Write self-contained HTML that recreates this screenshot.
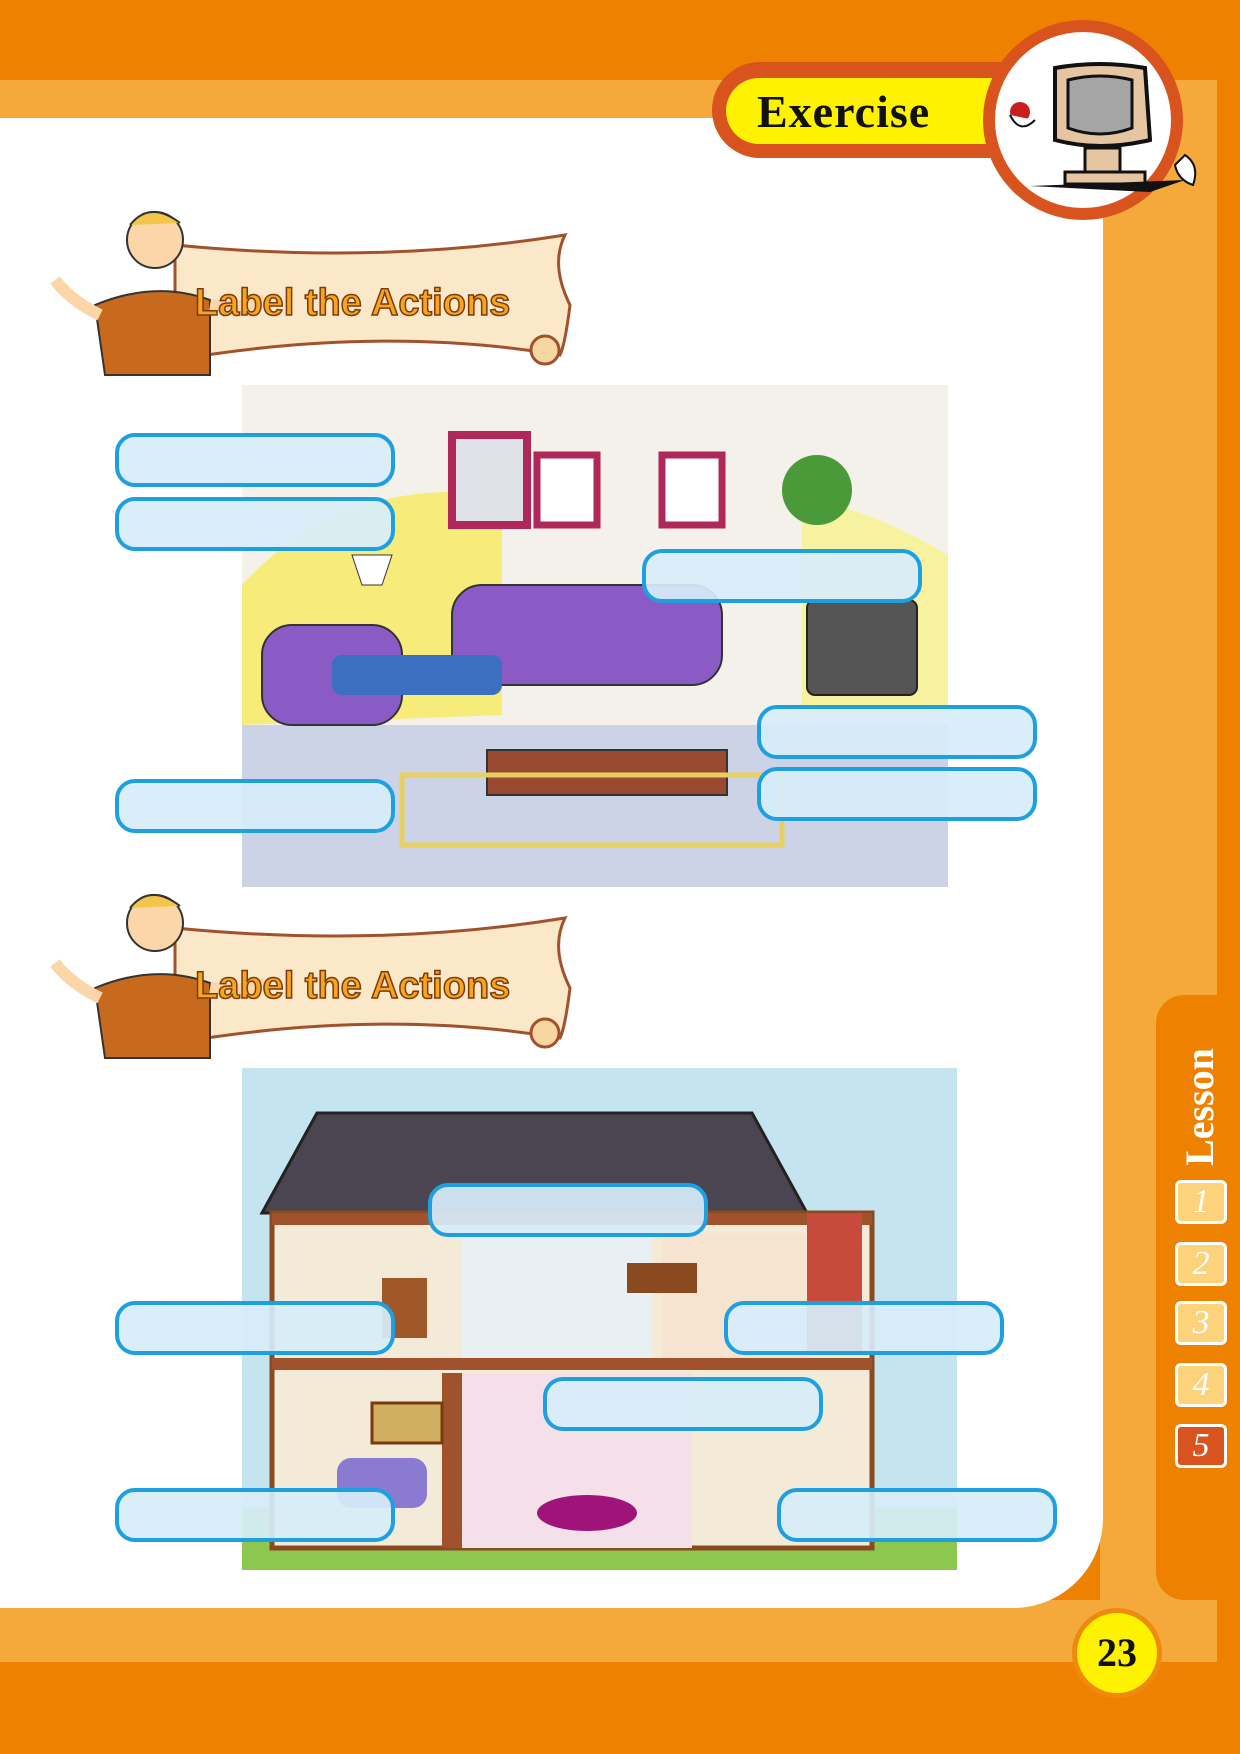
<!DOCTYPE html>
<html><head><meta charset="utf-8"><style>
*{margin:0;padding:0;box-sizing:border-box}
body{width:1240px;height:1754px;position:relative;overflow:hidden;background:#ee8200;font-family:"Liberation Sans",sans-serif}
.abs{position:absolute}
.lbl{position:absolute;width:280px;height:54px;border:4px solid #1ea0e0;border-radius:20px;background:rgba(215,237,250,0.92)}
.num{position:absolute;left:1175px;width:52px;height:44px;border:3px solid #fff;border-radius:6px;background:#fcd27a;color:#fff;font:italic 34px "Liberation Serif",serif;text-align:center;line-height:38px}
.title{position:absolute;font:bold 38px "Liberation Sans",sans-serif;color:#f7a51c;-webkit-text-stroke:1.5px #7a3a10}
</style></head><body>
<div class="abs" style="left:0;top:80px;width:1217px;height:38px;background:#f5a93a"></div>
<div class="abs" style="left:1100px;top:80px;width:117px;height:1582px;background:#f5a93a"></div>
<div class="abs" style="left:0;top:1600px;width:1217px;height:62px;background:#f5a93a"></div>
<div class="abs" style="left:0;top:118px;width:1103px;height:1490px;background:#fff;border-bottom-right-radius:90px"></div>
<div class="abs" style="left:1156px;top:995px;width:84px;height:605px;background:#ee8200;border-radius:28px 0 0 28px"></div>
<div class="abs" style="left:1115px;top:1085px;width:170px;height:44px;transform:rotate(-90deg);color:#fff;font:bold 40px 'Liberation Serif',serif;line-height:44px;text-align:center">Lesson</div>
<div class="num" style="top:1180px">1</div>
<div class="num" style="top:1242px">2</div>
<div class="num" style="top:1301px">3</div>
<div class="num" style="top:1363px">4</div>
<div class="num" style="top:1424px;background:#d9531e">5</div>
<div class="abs" style="left:1072px;top:1608px;width:90px;height:90px;border-radius:50%;background:#fff200;border:5px solid #ef8a10;text-align:center;font:bold 40px 'Liberation Serif',serif;line-height:80px;color:#111">23</div>
<div class="abs" style="left:712px;top:62px;width:340px;height:96px;border-radius:48px 0 0 48px;background:#d9531e"></div>
<div class="abs" style="left:726px;top:78px;width:320px;height:66px;border-radius:33px 0 0 33px;background:#fff200"></div>
<div class="abs" style="left:757px;top:84px;font:bold 46px 'Liberation Serif',serif;color:#111;letter-spacing:1px;line-height:56px">Exercise</div>
<div class="abs" style="left:983px;top:20px;width:200px;height:200px;border-radius:50%;background:#fff;border:12px solid #d9531e"></div>
<svg class="abs" style="left:960px;top:20px" width="240" height="200">
<path d="M95 48 Q140 40 185 48 L190 120 Q140 132 95 120Z" fill="#e6c6a2" stroke="#111" stroke-width="4"/>
<path d="M108 60 Q140 52 172 60 L172 108 Q140 120 108 108Z" fill="#a5a5a5" stroke="#111" stroke-width="3"/>
<rect x="125" y="128" width="35" height="25" fill="#e6c6a2" stroke="#111" stroke-width="3"/>
<rect x="105" y="152" width="80" height="12" fill="#e6c6a2" stroke="#111" stroke-width="3"/>
<path d="M70 166 L225 160 L190 172Z" fill="#111"/>
<circle cx="60" cy="92" r="10" fill="#c81e1e"/>
<path d="M50 95 q10 20 25 5" fill="#fff" stroke="#111" stroke-width="2"/>
<path d="M225 135 q15 10 8 30 q-15 -5 -18 -20Z" fill="#fff" stroke="#111" stroke-width="2"/>
</svg>
<svg class="abs" style="left:50px;top:205px" width="540" height="175">
<path d="M125 40 Q330 60 515 30 Q500 60 520 100 Q515 140 510 150 Q330 120 125 155Z" fill="#fbe8c8" stroke="#a0522d" stroke-width="3"/>
<circle cx="495" cy="145" r="14" fill="#f7d7a0" stroke="#a0522d" stroke-width="3"/>
<circle cx="105" cy="35" r="28" fill="#fbd6a8" stroke="#333" stroke-width="2"/>
<path d="M80 20 Q100 -5 130 18" fill="#f3c64a" stroke="#333" stroke-width="2"/>
<path d="M45 100 Q105 75 160 95 L160 170 L55 170Z" fill="#c86a1e" stroke="#333" stroke-width="2"/>
<path d="M5 75 Q20 95 50 110" stroke="#fbd6a8" stroke-width="12" fill="none"/>
<path d="M160 100 Q190 105 215 95" stroke="#fbd6a8" stroke-width="12" fill="none"/>
</svg>
<div class="title" style="left:195px;top:282px">Label the Actions</div>
<svg class="abs" style="left:50px;top:888px" width="540" height="175">
<path d="M125 40 Q330 60 515 30 Q500 60 520 100 Q515 140 510 150 Q330 120 125 155Z" fill="#fbe8c8" stroke="#a0522d" stroke-width="3"/>
<circle cx="495" cy="145" r="14" fill="#f7d7a0" stroke="#a0522d" stroke-width="3"/>
<circle cx="105" cy="35" r="28" fill="#fbd6a8" stroke="#333" stroke-width="2"/>
<path d="M80 20 Q100 -5 130 18" fill="#f3c64a" stroke="#333" stroke-width="2"/>
<path d="M45 100 Q105 75 160 95 L160 170 L55 170Z" fill="#c86a1e" stroke="#333" stroke-width="2"/>
<path d="M5 75 Q20 95 50 110" stroke="#fbd6a8" stroke-width="12" fill="none"/>
<path d="M160 100 Q190 105 215 95" stroke="#fbd6a8" stroke-width="12" fill="none"/>
</svg>
<div class="title" style="left:195px;top:965px">Label the Actions</div>
<svg class="abs" style="left:242px;top:385px" width="706" height="502">
<rect width="706" height="502" fill="#f4f1ea"/>
<path d="M0 200 Q100 90 260 110 L260 330 L0 340Z" fill="#f7ec7a"/>
<path d="M560 110 Q640 130 706 170 L706 330 L560 330Z" fill="#f7f2a0"/>
<rect x="0" y="340" width="706" height="162" fill="#cdd3e6"/>
<rect x="210" y="50" width="75" height="90" fill="#e0e0e8" stroke="#b0285a" stroke-width="8"/>
<rect x="295" y="70" width="60" height="70" fill="#fff" stroke="#b0285a" stroke-width="7"/>
<rect x="420" y="70" width="60" height="70" fill="#fff" stroke="#b0285a" stroke-width="7"/>
<rect x="210" y="200" width="270" height="100" rx="30" fill="#8a5bc4" stroke="#333" stroke-width="2"/>
<rect x="20" y="240" width="140" height="100" rx="30" fill="#8a5bc4" stroke="#333" stroke-width="2"/>
<rect x="565" y="215" width="110" height="95" rx="8" fill="#555" stroke="#222" stroke-width="2"/>
<rect x="245" y="365" width="240" height="45" fill="#9a4a30" stroke="#333" stroke-width="2"/>
<rect x="160" y="390" width="380" height="70" fill="none" stroke="#e8d060" stroke-width="5"/>
<circle cx="575" cy="105" r="35" fill="#4a9a3a"/>
<path d="M110 170 L150 170 L140 200 L120 200Z" fill="#fff" stroke="#333"/>
<rect x="90" y="270" width="170" height="40" rx="10" fill="#3b6fc0"/>
</svg>
<svg class="abs" style="left:242px;top:1068px" width="715" height="502">
<rect width="715" height="502" fill="#c4e4f0"/>
<rect x="0" y="440" width="715" height="62" fill="#8cc850"/>
<path d="M20 145 L75 45 L510 45 L565 145Z" fill="#4a4550" stroke="#222" stroke-width="3"/>
<rect x="30" y="145" width="600" height="335" fill="#f3ead8" stroke="#8a4a20" stroke-width="5"/>
<rect x="30" y="145" width="600" height="12" fill="#a0522d"/>
<rect x="30" y="290" width="600" height="12" fill="#a0522d"/>
<rect x="565" y="145" width="55" height="140" fill="#c84a3a"/>
<rect x="420" y="165" width="145" height="125" fill="#f6e4d0"/>
<rect x="220" y="165" width="190" height="125" fill="#e8f0f4"/>
<rect x="200" y="305" width="20" height="175" fill="#a0522d"/>
<rect x="220" y="305" width="230" height="175" fill="#f4e0e8"/>
<rect x="95" y="390" width="90" height="50" rx="14" fill="#8a7ad0"/>
<ellipse cx="345" cy="445" rx="50" ry="18" fill="#a0147a"/>
<rect x="130" y="335" width="70" height="40" fill="#d0b060" stroke="#7a3a10" stroke-width="3"/>
<rect x="140" y="210" width="45" height="60" fill="#a0582a"/>
<rect x="385" y="195" width="70" height="30" fill="#8a4a20"/>
</svg>
<div class="lbl" style="left:115px;top:433px"></div>
<div class="lbl" style="left:115px;top:497px"></div>
<div class="lbl" style="left:642px;top:549px"></div>
<div class="lbl" style="left:757px;top:705px"></div>
<div class="lbl" style="left:757px;top:767px"></div>
<div class="lbl" style="left:115px;top:779px"></div>
<div class="lbl" style="left:428px;top:1183px"></div>
<div class="lbl" style="left:115px;top:1301px"></div>
<div class="lbl" style="left:724px;top:1301px"></div>
<div class="lbl" style="left:543px;top:1377px"></div>
<div class="lbl" style="left:115px;top:1488px"></div>
<div class="lbl" style="left:777px;top:1488px"></div>
</body></html>
